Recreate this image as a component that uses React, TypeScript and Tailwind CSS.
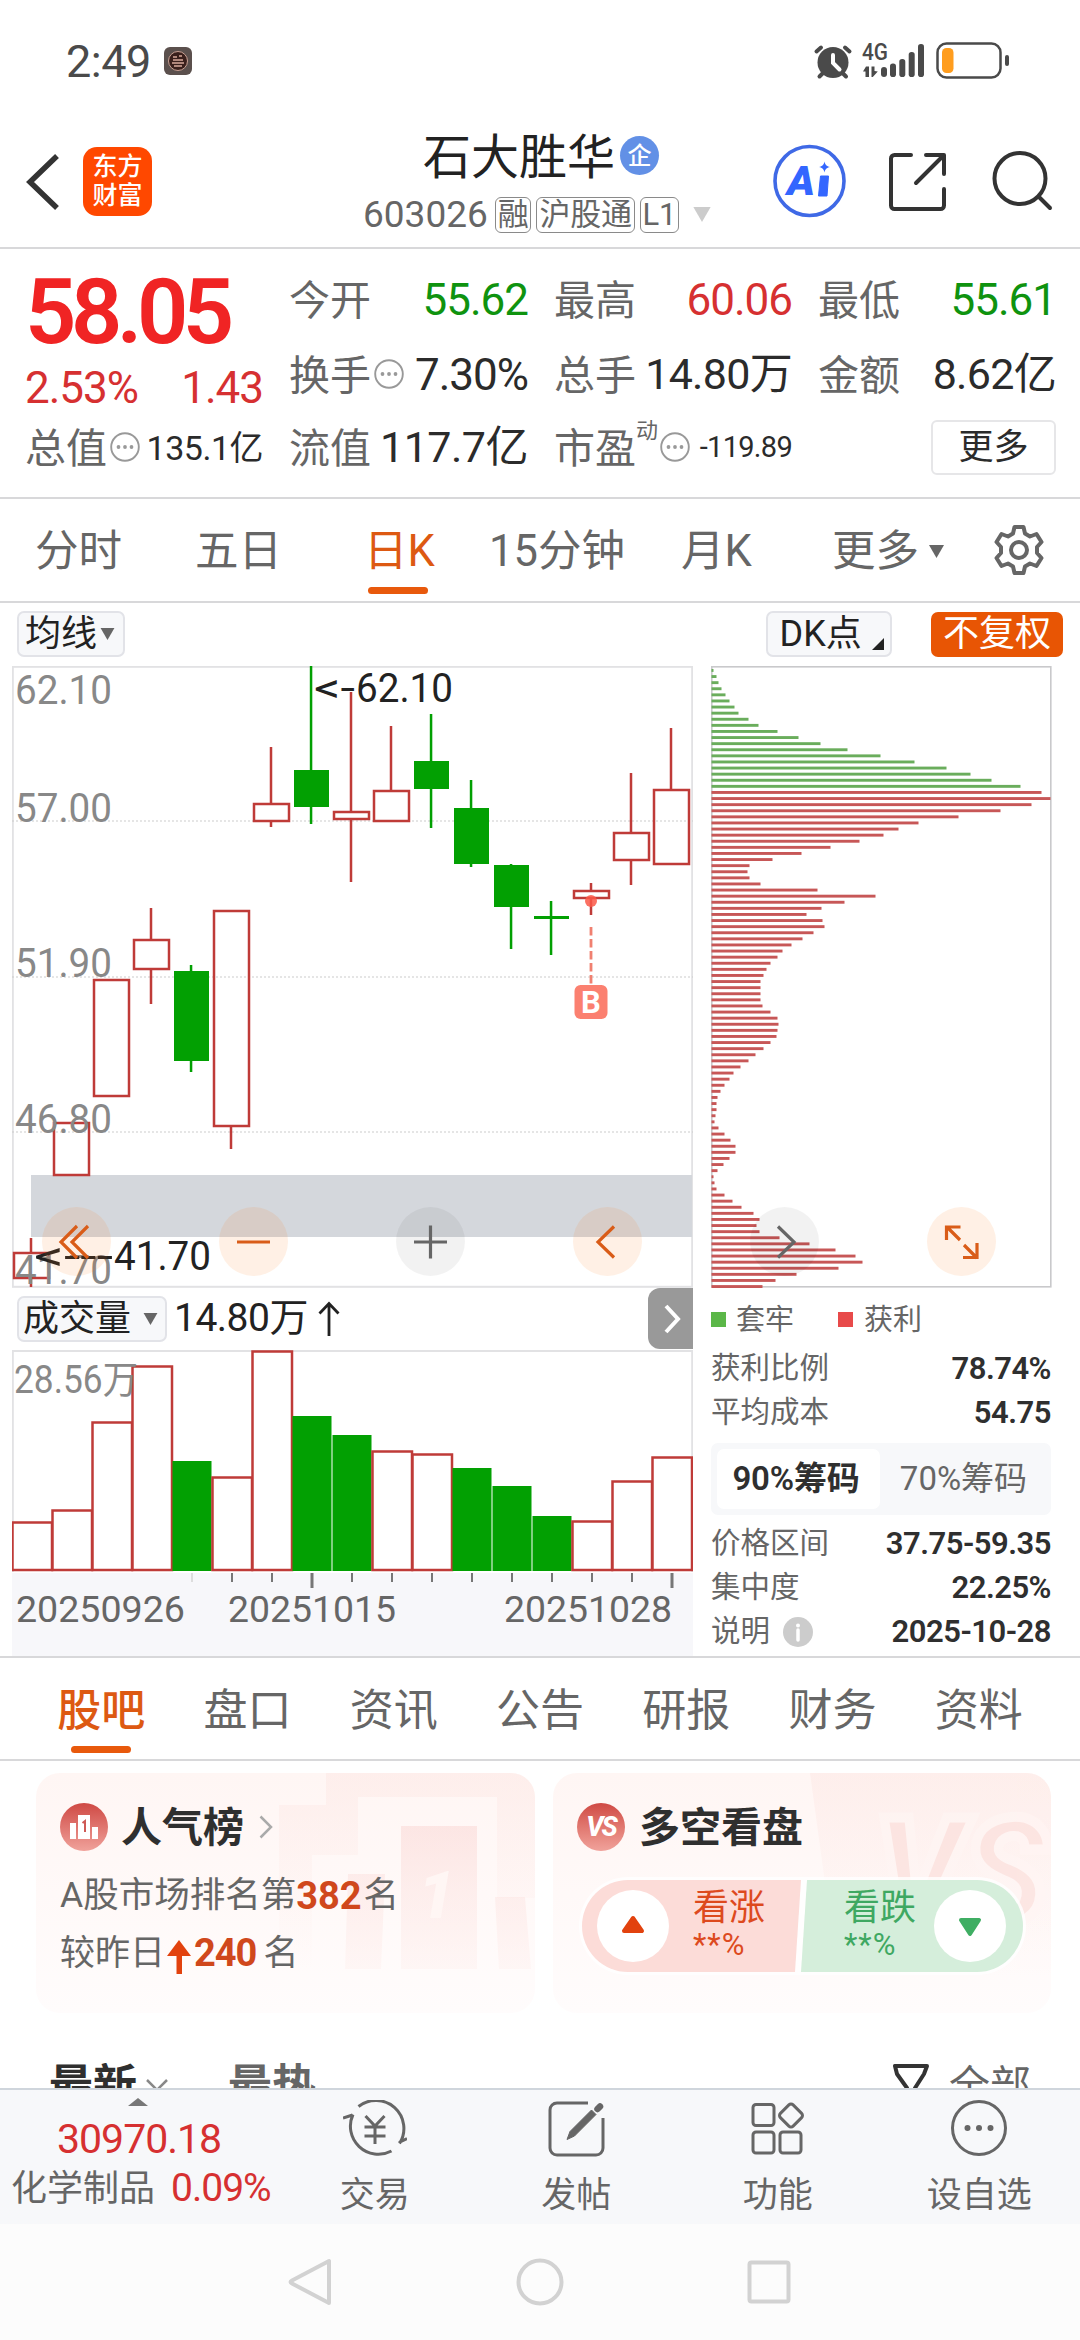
import { ReactNode } from 'react';

type Tone = 'up' | 'down' | 'plain';

interface Candle {
  up: boolean;
  high: number;
  top: number;
  bottom: number;
  low: number;
}

interface Volume {
  up: boolean;
  height: number;
}

const RED = '#bf3b38';
const GREEN = '#02a002';

const CANDLE_STEP = 40;
const CANDLE_START = 19;

// y positions are relative to the top of the k-line box
const candles: Candle[] = [
  { up: true, high: 572, top: 587, bottom: 612, low: 621 },
  { up: true, high: 457, top: 457, bottom: 509, low: 509 },
  { up: true, high: 313, top: 314, bottom: 430, low: 430 },
  { up: true, high: 242, top: 274, bottom: 303, low: 338 },
  { up: false, high: 299, top: 305, bottom: 395, low: 406 },
  { up: true, high: 245, top: 245, bottom: 460, low: 483 },
  { up: true, high: 81, top: 138, bottom: 155, low: 161 },
  { up: false, high: 0, top: 104, bottom: 141, low: 158 },
  { up: true, high: 26, top: 146, bottom: 153, low: 216 },
  { up: true, high: 60, top: 125, bottom: 155, low: 155 },
  { up: false, high: 48, top: 95, bottom: 123, low: 162 },
  { up: false, high: 114, top: 142, bottom: 198, low: 201 },
  { up: false, high: 198, top: 199, bottom: 241, low: 283 },
  { up: false, high: 235, top: 250, bottom: 253, low: 289 },
  { up: true, high: 217, top: 225, bottom: 232, low: 249 },
  { up: true, high: 107, top: 167, bottom: 194, low: 219 },
  { up: true, high: 62, top: 124, bottom: 198, low: 198 },
];

const volumes: Volume[] = [
  { up: true, height: 48 },
  { up: true, height: 60 },
  { up: true, height: 148 },
  { up: true, height: 204 },
  { up: false, height: 110 },
  { up: true, height: 93 },
  { up: true, height: 219 },
  { up: false, height: 155 },
  { up: false, height: 136 },
  { up: true, height: 119 },
  { up: true, height: 116 },
  { up: false, height: 103 },
  { up: false, height: 85 },
  { up: false, height: 55 },
  { up: true, height: 49 },
  { up: true, height: 89 },
  { up: true, height: 113 },
];

const chips = [
  2, 5, 7, 10, 14, 18, 23, 27, 37, 47, 66, 87, 109, 136, 169, 203, 235, 259, 280, 309,
  330, 339, 320, 289, 247, 207, 187, 172, 148, 119, 90, 61, 38, 36, 38, 49, 106, 164, 133, 110,
  95, 111, 113, 102, 91, 80, 71, 66, 59, 55, 52, 49, 49, 49, 49, 51, 59, 66, 67, 66,
  65, 59, 52, 44, 37, 29, 22, 18, 13, 9, 6, 5, 5, 4, 3, 7, 13, 19, 24, 24,
  18, 12, 6, 2, 3, 5, 13, 21, 30, 42, 48, 45, 48, 68, 98, 124, 144, 151, 127, 85,
  64, 51,
];
const TRAPPED_ROWS = 20;

const toneClass: Record<Tone, string> = {
  up: 'text-[#d63031]',
  down: 'text-[#0f930f]',
  plain: 'text-[#2b2b2b]',
};

function Caret({ className }: { className: string }) {
  return (
    <svg viewBox="0 0 15 13" className={className} fill="currentColor">
      <path d="M0 0h15L7.5 13z" />
    </svg>
  );
}

function MoreDots() {
  return (
    <svg viewBox="0 0 30 30" className="-mt-[4px] ml-[3px] h-[30px] w-[30px] shrink-0">
      <circle cx="15" cy="15" r="13.800" fill="none" stroke="#999" strokeWidth="1.900" />
      <circle cx="8.500" cy="15" r="1.900" fill="#999" />
      <circle cx="15" cy="15" r="1.900" fill="#999" />
      <circle cx="21.500" cy="15" r="1.900" fill="#999" />
    </svg>
  );
}

function StatusBar() {
  return (
    <div className="flex h-[122px] items-center pt-[1px] text-[#4a4a4a]">
      <span className="ml-[66px] text-[45px] leading-none tracking-[-0.5px]">2:49</span>
      <svg viewBox="0 0 28 28" className="ml-[13px] h-7 w-7">
        <rect width="28" height="28" rx="6" fill="#5b504d" />
        <circle cx="14" cy="14" r="9.500" fill="#3a201c" stroke="#c9a093" strokeWidth="1" />
        <path d="M9 10h4M9 13h10M8 16h12M10 19h8M15 9h3" stroke="#d8a99b" strokeWidth="1.600" />
      </svg>
      <svg viewBox="0 0 200 40" className="ml-auto mr-[71px] h-[40px] w-[200px]" fill="#4a4a4a">
        <g strokeLinecap="round" stroke="#4a4a4a" strokeWidth="4" fill="none">
          <path d="M7.500 10.500 12 6.500M36 6.500 40.500 10.500M10.500 35.500l4-4M37 35.500l-4-4" />
        </g>
        <circle cx="24" cy="21.500" r="15.500" />
        <path d="M24 14v8l6.500 6.500" fill="none" stroke="#fff" strokeWidth="4" strokeLinecap="round" />
        <text x="53" y="19" fontSize="23" fontWeight="500" textLength="26" lengthAdjust="spacingAndGlyphs">4G</text>
        <path d="M57 25.500h3V36h-3.500v-5.500H54zM62.500 25.500h3v4.500l3.300.500-5 5.500h-1.300z" />
        <rect x="72" y="26" width="6" height="10" rx="3" />
        <rect x="81" y="22.500" width="6" height="13.500" rx="2.800" />
        <rect x="90.300" y="18" width="6" height="18" rx="2.800" />
        <rect x="99.700" y="11" width="6" height="25" rx="2.800" />
        <rect x="109" y="3" width="6" height="33" rx="2.800" />
        <rect x="128.500" y="2.500" width="63" height="34" rx="9" fill="none" stroke="#4a4a4a" strokeWidth="2.500" />
        <rect x="133" y="7" width="11.500" height="25" rx="4.500" fill="#ff9d1e" />
        <rect x="196" y="14" width="4" height="11" rx="2" />
      </svg>
    </div>
  );
}

function Tag({ children }: { children: ReactNode }) {
  return (
    <span className="flex h-[36px] items-center rounded-[6px] border-[1.5px] border-[#8a8a8a] px-[2px] text-[31px] leading-none tracking-[-0.3px]">
      {children}
    </span>
  );
}

function Header() {
  return (
    <header className="flex h-[127px] border-b-2 border-[#d8d8da]">
      <svg viewBox="0 0 34 56" className="ml-[26px] mt-[32px] h-[56px] w-[34px]" fill="none" stroke="#333" strokeWidth="5.500">
        <path d="M31 2 4 28l27 26" />
      </svg>
      <div className="ml-[23px] mt-[25px] flex h-[69px] w-[69px] flex-col items-center justify-center rounded-[14px] bg-[#ff4800] text-[25px] font-medium leading-[29px] text-white">
        <span>东方</span>
        <span>财富</span>
      </div>
      <div className="ml-[211px] flex w-[360px] flex-col">
        <div className="mt-[10px] flex h-[52px] items-center pl-[60px]">
          <span className="text-[48px] leading-none text-[#222]">石大胜华</span>
          <span className="-mt-1 ml-[5px] flex h-[39px] w-[39px] items-center justify-center rounded-full bg-[#6290e6] text-[24px] font-medium leading-none text-white">
            企
          </span>
        </div>
        <div className="mt-[13px] flex h-[36px] items-center gap-[5px] text-[#666]">
          <span className="pr-[2px] text-[37px] leading-none">603026</span>
          <Tag>融</Tag>
          <Tag>沪股通</Tag>
          <Tag>L1</Tag>
          <Caret className="ml-[7px] h-[15px] w-[22px] text-[#ccc]" />
        </div>
      </div>
      <svg viewBox="0 0 290 76" className="ml-auto mr-[19px] mt-[20px] h-[76px] w-[290px]" fill="none">
        <circle cx="38.500" cy="39" r="34.500" stroke="#3f69e6" strokeWidth="3.600" />
        <text x="16" y="53" fontSize="40" fontWeight="900" fontStyle="italic" fill="#3366ff" textLength="28" lengthAdjust="spacingAndGlyphs">A</text>
        <path d="M49.500 34h8l-1.500 20h-8.500z" fill="#3366ff" stroke="#3366ff" strokeLinejoin="round" />
        <path d="M53.500 19.500c.8 3.500 2 4.700 5.500 5.500-3.500.8-4.700 2-5.500 5.500-.8-3.500-2-4.700-5.500-5.500 3.500-.8 4.700-2 5.500-5.500z" fill="#3366ff" />
        <g stroke="#333" strokeWidth="4" strokeLinecap="round" strokeLinejoin="round">
          <path d="M140 13h-16.500a3.500 3.500 0 0 0-3.500 3.500v47a3.500 3.500 0 0 0 3.500 3.500h46a3.500 3.500 0 0 0 3.500-3.500V47" />
          <path d="M155 13h18v19M172 14l-27 27" />
          <circle cx="249" cy="36.500" r="25.500" />
          <path d="m268 55 11 11" />
        </g>
      </svg>
    </header>
  );
}

function Quote({ label, value, tone = 'plain', size = 'text-[44px]', extra }: { label: string; value: string; tone?: Tone; size?: string; extra?: ReactNode }) {
  return (
    <div className="flex h-[50px] items-center justify-between whitespace-nowrap leading-none">
      <span className="flex items-center pt-[3px] text-[41px] text-[#666]">
        {label}
        {extra}
      </span>
      <span className={`${size} ${toneClass[tone]}`}>{value}</span>
    </div>
  );
}

function QuotePanel() {
  return (
    <section className="h-[250px] border-b-2 border-[#d8d8da] px-[25px]">
      <div className="grid grid-cols-[238px_239px_238px_238px] gap-x-[26px]">
        <div className="flex h-[174px] flex-col">
          <span className="mt-[19px] text-[90px] font-semibold leading-[90px] tracking-[-5.5px] text-[#f02424]">58.05</span>
          <div className="mt-[5px] flex h-[50px] items-center justify-between text-[44px] leading-none tracking-[-1px] text-[#d63031]">
            <span>2.53%</span>
            <span>1.43</span>
          </div>
        </div>
        <div className="flex flex-col gap-[25px] pt-[26px]">
          <Quote label="今开" value="55.62" tone="down" size="text-[44px] tracking-[-1px]" />
          <Quote label="换手" value="7.30%" size="text-[44px] tracking-[-1px]" extra={<MoreDots />} />
        </div>
        <div className="flex flex-col gap-[25px] pt-[26px]">
          <Quote label="最高" value="60.06" tone="up" size="text-[44px] tracking-[-1px]" />
          <Quote label="总手" value="14.80万" size="text-[43px] tracking-[-0.7px]" />
        </div>
        <div className="flex flex-col gap-[25px] pt-[26px]">
          <Quote label="最低" value="55.61" tone="down" size="text-[44px] tracking-[-1px]" />
          <Quote label="金额" value="8.62亿" size="text-[43px] tracking-[-0.7px]" />
        </div>
        <Quote label="总值" value="135.1亿" size="text-[34px] tracking-[-0.5px]" extra={<MoreDots />} />
        <Quote label="流值" value="117.7亿" size="text-[43px] tracking-[-0.5px]" />
        <Quote
          label="市盈"
          value="-119.89"
          size="text-[29px] tracking-[-0.7px]"
          extra={
            <>
              <span className="-mr-[1px] -mt-9 text-[22px]">动</span>
              <MoreDots />
            </>
          }
        />
        <button className="-mt-[3px] ml-auto h-[55px] w-[125px] rounded-[6px] border-2 border-[#e6e6e8] text-[35px] leading-none text-[#2b2b2b]">更多</button>
      </div>
    </section>
  );
}

function PeriodTabs() {
  return (
    <nav className="flex h-[104px] items-center border-b-2 border-[#d8d8da] pt-[4px] text-[43.500px] leading-none text-[#666]">
      <span className="ml-[35px] w-[88px]">分时</span>
      <span className="ml-[72px] w-[88px]">五日</span>
      <span className="relative ml-[81px] w-[74px] whitespace-nowrap text-[#dd5912]">
        日K
        <i className="absolute left-[4px] top-[57px] h-[7px] w-[60px] rounded-full bg-[#e8590c]" />
      </span>
      <span className="ml-[51px] w-[140px] whitespace-nowrap">15分钟</span>
      <span className="ml-[52px] w-[76px] whitespace-nowrap">月K</span>
      <span className="ml-[75px] w-[88px]">更多</span>
      <Caret className="ml-[9px] h-[13px] w-[15px]" />
      <svg viewBox="0 0 52 52" className="-mt-[3px] ml-[49px] h-[52px] w-[52px]" fill="none" stroke="#666" strokeWidth="4" strokeLinejoin="round">
        <path d="M21.500 3h9l1.500 6.500 5 3L43.500 10l5 8-4.500 5v6l4.500 5-5 8-6.500-2.500-5 3L30.500 49h-9L20 42.500l-5-3L8.500 42l-5-8L8 29v-6l-4.500-5 5-8 6.500 2.500 5-3z" />
        <circle cx="26" cy="26" r="8" />
      </svg>
    </nav>
  );
}

function ChartToolbar() {
  return (
    <div className="flex h-[63px] items-center px-[17px] text-[36px] leading-none text-[#222]">
      <button className="flex h-[46px] w-[108px] items-center rounded-[7px] border-2 border-[#e2e3e8] bg-[#f7f8fa] pl-[6px]">
        均线
        <Caret className="ml-[3px] h-[12px] w-[15px] text-[#666]" />
      </button>
      <button className="ml-[641px] flex h-[46px] w-[127px] items-center whitespace-nowrap rounded-[7px] border-2 border-[#e2e3e8] bg-[#f7f8fa] pl-[12px]">
        DK点
        <svg viewBox="0 0 12 12" className="ml-[10px] mt-5 h-[12px] w-[12px] shrink-0">
          <path d="M12 0v12H0z" fill="#222" />
        </svg>
      </button>
      <button className="ml-[39px] h-[45px] w-[132px] shrink-0 rounded-[7px] bg-[#e85504] text-white">不复权</button>
    </div>
  );
}

function AxisLabel({ y, children }: { y: number; children: string }) {
  return (
    <text x="3" y={y} fontSize="41" fill="#888" textLength="97" lengthAdjust="spacingAndGlyphs">
      {children}
    </text>
  );
}

function KLine() {
  return (
    <svg viewBox="0 0 681 622" className="block h-[622px] w-[681px]">
      <rect x="0.800" y="0.800" width="679.400" height="620" fill="none" stroke="#e2e2e4" strokeWidth="2" />
      {[155, 311, 466].map((y) => (
        <path key={y} d={`M0 ${y}h681`} stroke="#ccc" strokeWidth="1.200" strokeDasharray="2 2" />
      ))}
      <rect x="19" y="509" width="661" height="62" fill="#d4d7dc" />
      {candles.map((c, i) => {
        const x = CANDLE_START + i * CANDLE_STEP;
        return c.up ? (
          <g key={i} stroke={RED} strokeWidth="2.500" fill="none">
            <path d={`M${x} ${c.high}V${c.top}M${x} ${c.bottom}V${c.low}`} />
            <rect x={x - 17} y={c.top} width="35" height={c.bottom - c.top} />
          </g>
        ) : (
          <g key={i} fill={GREEN}>
            <rect x={x - 1.2} y={c.high} width="2.500" height={c.low - c.high} />
            <rect x={x - 17} y={c.top} width="35" height={c.bottom - c.top} />
          </g>
        );
      })}
      <circle cx="579" cy="235" r="6" fill="#fa5848" opacity="0.850" />
      <path d="M579 261v59" stroke="#f08070" strokeWidth="2.800" strokeDasharray="8.500 3.500" />
      <rect x="562.500" y="319" width="33" height="34" rx="6" fill="#fb8070" />
      <text x="579" y="347" fontSize="31" fontWeight="700" fill="#fff" textAnchor="middle">B</text>
      <AxisLabel y={38}>62.10</AxisLabel>
      <AxisLabel y={156}>57.00</AxisLabel>
      <AxisLabel y={311}>51.90</AxisLabel>
      <AxisLabel y={467}>46.80</AxisLabel>
      <AxisLabel y={618}>41.70</AxisLabel>
      <g fontSize="41" fill="#222">
        <text x="302" y="36" textLength="41" lengthAdjust="spacingAndGlyphs">&lt;-</text>
        <text x="344" y="36" textLength="97" lengthAdjust="spacingAndGlyphs">62.10</text>
        <text x="22" y="604" textLength="79" lengthAdjust="spacingAndGlyphs">&lt;---</text>
        <text x="102" y="604" textLength="97" lengthAdjust="spacingAndGlyphs">41.70</text>
      </g>
    </svg>
  );
}

function ChipChart() {
  return (
    <svg viewBox="0 0 341 622" className="block h-[622px] w-[341px]">
      <rect x="0.800" y="0.800" width="339" height="620" fill="none" stroke="#c9c9cb" strokeWidth="1.600" />
      {chips.map((w, i) => (
        <rect key={i} x="0.500" y={3 + i * 6.1} width={w} height="2.900" fill={i < TRAPPED_ROWS ? '#6aad5c' : '#c75757'} />
      ))}
    </svg>
  );
}

const controls: { icon: string; accent: boolean }[] = [
  { icon: 'M35 19 19 35l16 16M46 19 30 35l16 16', accent: true },
  { icon: 'M18 35h33', accent: true },
  { icon: 'M18 35h33M34.500 18.500v33', accent: false },
  { icon: 'M41 19.500 25 35l16 15.500', accent: true },
  { icon: 'M28 19.500 44 35 28 50.500', accent: false },
  { icon: 'M19.500 33V20h14M20 20l13 13M37 38l13 13M50 36v14.500H36', accent: true },
];

function ChartControls() {
  return (
    <div className="absolute left-[30px] right-[84px] top-[541px] flex justify-between">
      {controls.map((c, i) => (
        <span key={i} className={`h-[69px] w-[69px] rounded-full ${c.accent ? 'bg-[#ff6b00]/10' : 'bg-black/5'}`}>
          <svg viewBox="0 0 69 69" fill="none" stroke={c.accent ? '#d95c18' : '#666'} strokeWidth="3.200">
            <path d={c.icon} />
          </svg>
        </span>
      ))}
    </div>
  );
}

function VolumeChart() {
  return (
    <svg viewBox="0 0 681 306" className="block h-[306px] w-[681px]">
      <rect x="0" y="223" width="681" height="83" fill="#f7f7fa" />
      <path d="M.8 222V1h679.400v221" fill="none" stroke="#e2e2e4" strokeWidth="2" />
      {volumes.map((v, i) => {
        const x = i * CANDLE_STEP;
        return v.up ? (
          <rect key={i} x={x + 0.5} y={220.5 - v.height} width="39.500" height={v.height - 0.5} fill="#fff" stroke={RED} strokeWidth="2.500" />
        ) : (
          <rect key={i} x={x + 0.5} y={221 - v.height} width="39" height={v.height} fill={GREEN} />
        );
      })}
      {Array.from({ length: 13 }, (_, i) => {
        const major = i === 3 || i === 12;
        return (
          <path
            key={i}
            d={`M${180 + i * CANDLE_STEP} 223v${major ? 15 : 9}`}
            stroke={i === 0 ? '#ddd' : '#777'}
            strokeWidth={major ? 3 : 2}
          />
        );
      })}
      <text x="2" y="43" fontSize="38" fill="#888" textLength="124" lengthAdjust="spacingAndGlyphs">28.56万</text>
      <g fontSize="37.500" fill="#666">
        <text x="4" y="271.500" textLength="169" lengthAdjust="spacingAndGlyphs">20250926</text>
        <text x="216" y="271.500" textLength="168" lengthAdjust="spacingAndGlyphs">20251015</text>
        <text x="492" y="271.500" textLength="168" lengthAdjust="spacingAndGlyphs">20251028</text>
      </g>
    </svg>
  );
}

function StatRow({ label, value, info }: { label: string; value: string; info?: boolean }) {
  return (
    <div className="flex h-[44px] items-center justify-between whitespace-nowrap leading-none">
      <span className="flex items-center pt-[1px] text-[29.5px] text-[#666]">
        {label}
        {info && (
          <svg viewBox="0 0 30 30" className="ml-[13px] h-[30px] w-[30px]">
            <circle cx="15" cy="15" r="15" fill="#ccc" />
            <path d="M15 13v10" stroke="#fff" strokeWidth="3.500" strokeLinecap="round" />
            <circle cx="15" cy="8.500" r="2" fill="#fff" />
          </svg>
        )}
      </span>
      <span className="text-[31px] font-semibold tracking-[-0.5px] text-[#2f2f2f]">{value}</span>
    </div>
  );
}

function ChipStats() {
  return (
    <div className="ml-[18px] w-[340px] pt-[14px]">
      <div className="flex h-[36px] items-center text-[29px] leading-none text-[#666]">
        <i className="h-[15px] w-[15px] bg-[#5bb748]" />
        <span className="ml-[10px] pt-[1px]">套牢</span>
        <i className="ml-[44px] h-[15px] w-[15px] bg-[#e84a4a]" />
        <span className="ml-[11px] pt-[1px]">获利</span>
      </div>
      <div className="mt-[9px]">
        <StatRow label="获利比例" value="78.74%" />
        <StatRow label="平均成本" value="54.75" />
      </div>
      <div className="mb-[7px] mt-[8px] flex h-[72px] items-center whitespace-nowrap rounded-[7px] bg-[#f7f8fa] p-[6px] leading-none">
        <span className="flex h-[60px] w-[163px] items-center justify-center rounded-[7px] bg-white pr-[5px] text-[33px] font-semibold tracking-[-0.2px] text-[#2f2f2f]">90%筹码</span>
        <span className="flex-1 pl-[2px] text-center text-[33px] text-[#666]">70%筹码</span>
      </div>
      <StatRow label="价格区间" value="37.75-59.35" />
      <StatRow label="集中度" value="22.25%" />
      <StatRow label="说明" value="2025-10-28" info />
    </div>
  );
}

function ChartArea() {
  return (
    <section className="h-[993px] border-b-2 border-[#d8d8da] pl-[12px]">
      <div className="relative flex gap-[18px]">
        <KLine />
        <ChipChart />
        <ChartControls />
      </div>
      <div className="flex">
        <div className="w-[681px]">
          <div className="flex h-[62px] items-center text-[#222]">
            <button className="ml-[5px] flex h-[46px] w-[150px] items-center whitespace-nowrap rounded-[7px] border-2 border-[#e2e3e8] bg-[#f7f8fa] pl-[4px] text-[36px] leading-none">
              成交量
              <Caret className="ml-[12px] h-[12px] w-[15px] shrink-0 text-[#666]" />
            </button>
            <span className="ml-[7px] text-[39px] leading-none tracking-[-0.5px]">14.80万</span>
            <svg viewBox="0 0 22 36" className="ml-[10px] h-[36px] w-[22px]" fill="none" stroke="#222" strokeWidth="2.800">
              <path d="M11 35V3M1.500 12.500 11 2.500l9.500 10" />
            </svg>
            <span className="ml-auto flex h-[61px] w-[45px] items-center justify-center rounded-l-[12px] bg-[#999]">
              <svg viewBox="0 0 20 32" className="ml-[2px] h-[32px] w-[20px]" fill="none" stroke="#fff" strokeWidth="4">
                <path d="m4 3 12 13L4 29" />
              </svg>
            </span>
          </div>
          <VolumeChart />
        </div>
        <ChipStats />
      </div>
    </section>
  );
}

const infoTabs = ['股吧', '盘口', '资讯', '公告', '研报', '财务', '资料'];

function InfoTabs() {
  return (
    <nav className="flex h-[103px] items-center border-b-2 border-[#d8d8da] px-[28px] pt-[5px] text-[44px] leading-none text-[#666]">
      {infoTabs.map((tab, i) => (
        <span key={tab} className={`relative flex-1 text-center ${i === 0 ? 'font-medium text-[#dd5912]' : ''}`}>
          {tab}
          {i === 0 && <i className="absolute left-1/2 top-[57px] h-[7px] w-[60px] -translate-x-1/2 rounded-full bg-[#e8590c]" />}
        </span>
      ))}
    </nav>
  );
}

function PopularityCard() {
  return (
    <div className="relative h-[240px] w-[499px] overflow-hidden rounded-[24px] bg-linear-to-b from-[#fff6f4] to-[#fffcfc] px-[24px] text-[#666]">
      <svg viewBox="0 0 499 240" className="absolute inset-0 h-[240px] w-[499px]">
        <defs>
          <linearGradient id="podium" x1="0" y1="0" x2="0" y2="1">
            <stop offset="0" stopColor="#f8c9c6" stopOpacity="0.380" />
            <stop offset="1" stopColor="#fde9e6" stopOpacity="0.280" />
          </linearGradient>
          <linearGradient id="podiumShade" x1="0" y1="0" x2="0" y2="1">
            <stop offset="0" stopColor="#fbdcd8" stopOpacity="0.300" />
            <stop offset="1" stopColor="#fbdcd8" stopOpacity="0" />
          </linearGradient>
        </defs>
        <path d="M290 0h209v125h-38V24H322v58h-46v115h-33V32h47z" fill="url(#podiumShade)" />
        <path d="M365 53h76v143h-76zM312 101h37l-4 95h-36zM459 124h30l6 72h-32z" fill="url(#podium)" />
        <text x="382" y="145" fontSize="66" fontWeight="900" fontStyle="italic" fill="#fff6f4">1</text>
      </svg>
      <div className="relative flex h-[108px] items-center">
        <svg viewBox="0 0 48 48" className="h-[48px] w-[48px]">
          <defs>
            <linearGradient id="badge" x1="0" y1="0" x2="0" y2="1">
              <stop offset="0" stopColor="#cf4944" />
              <stop offset="1" stopColor="#f0a29b" />
            </linearGradient>
          </defs>
          <circle cx="24" cy="24" r="24" fill="url(#badge)" />
          <path d="M10 20h6v16h-6zM18 12h12v24H18zM32 24h6v12h-6z" fill="#fff" />
          <path d="m22.500 20 2.500-2v11" fill="none" stroke="#cf5a55" strokeWidth="2" />
        </svg>
        <span className="ml-[13px] pt-[2px] text-[41px] font-semibold leading-none text-[#2f2f2f]">人气榜</span>
        <svg viewBox="0 0 14 24" className="ml-[15px] h-[24px] w-[14px]" fill="none" stroke="#aaa" strokeWidth="2.500">
          <path d="m1.500 1.500 10.500 10.500L1.500 22.500" />
        </svg>
      </div>
      <p className="relative -mt-[5px] flex h-[40px] items-center whitespace-nowrap text-[35.5px] leading-none">
        A股市场排名第<b className="text-[38px] text-[#d0481c]">382</b>
        <span className="ml-[2px]">名</span>
      </p>
      <p className="relative mt-[17px] flex h-[40px] items-center whitespace-nowrap text-[35px] leading-none">
        较昨日
        <svg viewBox="0 0 24 34" className="ml-[2px] mt-2 h-[34px] w-[24px]">
          <path d="M12 0l12 16h-9v18H9.500V16H0z" fill="#e2420e" />
        </svg>
        <b className="ml-[3px] text-[38px] tracking-[-1px] text-[#d0481c]">240</b>
        <span className="ml-[7px]">名</span>
      </p>
    </div>
  );
}

function SentimentCard() {
  return (
    <div className="relative h-[240px] w-[498px] overflow-hidden rounded-[24px] bg-linear-to-b from-[#fff6f4] to-[#fffcfc] pl-[24px]">
      <svg viewBox="0 0 498 240" className="absolute inset-0 h-[240px] w-[498px]">
        <path d="M257 0h241v205H285z" fill="url(#podiumShade)" />
        <text x="322" y="150" fontSize="148" fontWeight="900" fontStyle="italic" fill="#fbdcd8" opacity="0.600" stroke="#fff6f4" strokeWidth="10" textLength="172" lengthAdjust="spacingAndGlyphs">VS</text>
      </svg>
      <div className="relative flex h-[108px] items-center">
        <span className="flex h-[48px] w-[48px] items-center justify-center rounded-full bg-linear-to-b from-[#cf4944] to-[#f0a29b] text-[27px] font-extrabold italic leading-none tracking-[-2px] text-white">
          VS
        </span>
        <span className="ml-[14px] pt-[2px] text-[41px] font-semibold leading-none text-[#2f2f2f]">多空看盘</span>
      </div>
      <div className="relative ml-[2px] mt-[-4px] h-[98px] w-[447px]">
        <svg viewBox="0 0 447 98" className="absolute inset-0 h-[98px] w-[447px]">
          <rect width="447" height="98" rx="49" fill="#fff" opacity="0.800" />
          <path d="M49 3h173l-6 92H49a46 46 0 0 1 0-92z" fill="#fcdcd8" />
          <path d="M228 3h170a46 46 0 0 1 0 92H222z" fill="#d5eedb" />
          <circle cx="54" cy="49" r="36" fill="#fff" />
          <circle cx="391" cy="49" r="36" fill="#fff" />
          <path d="M54 41 63 54H45z" fill="#e2420e" stroke="#e2420e" strokeWidth="4" strokeLinejoin="round" />
          <path d="M391 57 400 43h-18z" fill="#3fae63" stroke="#3fae63" strokeWidth="4" strokeLinejoin="round" />
        </svg>
        <div className="relative flex pt-[13px] leading-none">
          <div className="ml-[114px] w-[151px] text-[#dd4a1e]">
            <p className="text-[36px]">看涨</p>
            <p className="mt-[3px] text-[31px] tracking-[1px]">**%</p>
          </div>
          <div className="text-[#3fa862]">
            <p className="text-[36px]">看跌</p>
            <p className="mt-[3px] text-[31px] tracking-[1px]">**%</p>
          </div>
        </div>
      </div>
    </div>
  );
}

function PostFilter() {
  return (
    <div className="mt-[50px] flex h-[25px] overflow-hidden pl-[49px] pt-[2px] text-[44px] leading-[43px] text-[#666]">
      <span className="font-bold text-[#2f2f2f]">最新</span>
      <svg viewBox="0 0 22 12" className="ml-[9px] mt-[14px] h-[12px] w-[22px] shrink-0" fill="none" stroke="#888" strokeWidth="2.500">
        <path d="m1 1 10 10L21 1" />
      </svg>
      <span className="ml-[60px] font-semibold">最热</span>
      <svg viewBox="0 0 40 40" className="-mt-[2px] ml-auto h-[40px] w-[40px]" fill="none" stroke="#333" strokeWidth="4" strokeLinejoin="round">
        <path d="M4 3h32l-3 8-9 14v12l-8-5v-7L6 11z" />
      </svg>
      <span className="ml-[18px] mr-[49px] text-[41px]">全部</span>
    </div>
  );
}

const actions: { label: string; icon: ReactNode }[] = [
  {
    label: '交易',
    icon: (
      <>
        <path d="M15.500 6.500a28 28 0 0 1 41 37M10 14.500A28 28 0 0 0 48.500 51M0 18l9.500-3M56 42.500l8-4" />
        <path d="M22.500 16 32 26l9.500-10M32 26v18M21.500 27h21M21.500 36h21" />
      </>
    ),
  },
  {
    label: '发帖',
    icon: (
      <>
        <path d="M44 3H13a7 7 0 0 0-7 7v38a7 7 0 0 0 7 7h39a7 7 0 0 0 7-7V18" />
        <path d="m53.500 9 2.500-2.500" strokeWidth="6.500" strokeLinecap="round" />
        <path d="M47.500 10 52 14.500 30.500 36 23 39.500l3-8z" fill="#666" strokeWidth="1" />
      </>
    ),
  },
  {
    label: '功能',
    icon: (
      <>
        <rect x="7" y="4.500" width="21" height="21" rx="3" />
        <rect x="7" y="32" width="21" height="21" rx="3" />
        <rect x="34" y="32" width="21" height="21" rx="3" />
        <rect x="36" y="6.500" width="18" height="18" rx="3" transform="rotate(45 45 15.500)" />
      </>
    ),
  },
  {
    label: '设自选',
    icon: (
      <>
        <circle cx="32" cy="28" r="26.500" />
        <g fill="#666" stroke="none">
          <circle cx="20.500" cy="28" r="3" />
          <circle cx="32" cy="28" r="3" />
          <circle cx="43.500" cy="28" r="3" />
        </g>
      </>
    ),
  },
];

function BottomBar() {
  return (
    <footer className="flex h-[136px] border-t-2 border-[#cfd5dc] bg-[#f7f8fa]">
      <div className="flex w-[274px] flex-col leading-none">
        <svg viewBox="0 0 20 8" className="ml-[128px] mt-[8px] h-[8px] w-[20px]">
          <path d="M10 0l10 8H0z" fill="#777" />
        </svg>
        <span className="ml-[57px] mt-[13px] text-[41px] tracking-[-1px] text-[#d63031]">30970.18</span>
        <div className="mt-[9px] flex items-center whitespace-nowrap">
          <span className="ml-[11px] text-[36px] text-[#666]">化学制品</span>
          <span className="ml-[16px] text-[39px] tracking-[-1px] text-[#d63031]">0.09%</span>
        </div>
      </div>
      {actions.map((a) => (
        <div key={a.label} className="flex w-[201.500px] flex-col items-center pt-[10px]">
          <svg viewBox="0 0 64 58" className="h-[58px] w-[64px]" fill="none" stroke="#666" strokeWidth="3">
            {a.icon}
          </svg>
          <span className="mt-[20px] text-[35px] leading-none text-[#666]">{a.label}</span>
        </div>
      ))}
    </footer>
  );
}

function SystemNav() {
  return (
    <div className="flex h-[116px] items-center justify-center gap-[179px] bg-[#fcfcfc]">
      <svg viewBox="0 0 50 50" className="h-[50px] w-[50px]" fill="none" stroke="#d2d2d2" strokeWidth="4" strokeLinejoin="round">
        <path d="M43 4v42L6 26.500q-3-1.500 0-3z" />
      </svg>
      <svg viewBox="0 0 50 50" className="h-[50px] w-[50px]" fill="none" stroke="#d2d2d2" strokeWidth="4">
        <circle cx="25" cy="25" r="21.500" />
      </svg>
      <svg viewBox="0 0 50 50" className="h-[50px] w-[50px]" fill="none" stroke="#d2d2d2" strokeWidth="4">
        <rect x="5.500" y="5.500" width="39" height="39" rx="2" />
      </svg>
    </div>
  );
}

export default function App() {
  return (
    <div className="flex h-[2340px] w-[1080px] flex-col overflow-hidden bg-white font-[Roboto,'Noto_Sans_CJK_SC',sans-serif]">
      <StatusBar />
      <Header />
      <QuotePanel />
      <PeriodTabs />
      <ChartToolbar />
      <ChartArea />
      <InfoTabs />
      <div className="mt-[12px] flex gap-[18px] pl-[36px]">
        <PopularityCard />
        <SentimentCard />
      </div>
      <PostFilter />
      <BottomBar />
      <SystemNav />
    </div>
  );
}
